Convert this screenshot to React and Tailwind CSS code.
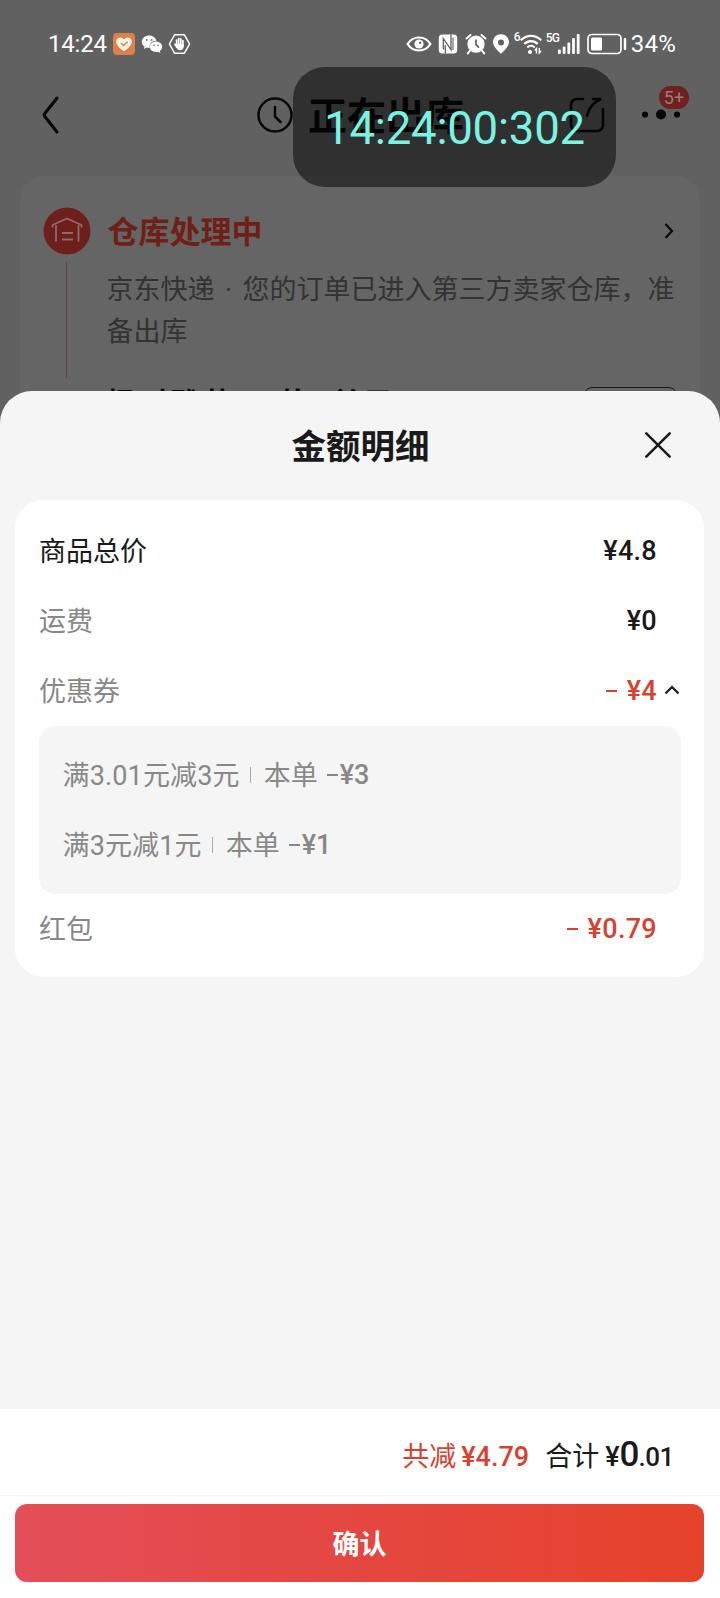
import React from "react";

const coupons = [
  { rule: "满3.01元减3元", amount: "¥3" },
  { rule: "满3元减1元", amount: "¥1" },
];

const StatusBar = () => (
  <div className="h-[88px] pl-12 pr-11 flex items-center justify-between text-white">
    <div className="flex items-center">
      <span className="w-[65px] text-2xl leading-6 tracking-[-0.2px]">14:24</span>
      <svg width="22" height="22" viewBox="0 0 22 22">
        <rect width="22" height="22" rx="4" fill="#dd8049" />
        <path
          d="M11 18.2C6.500 15 3.200 12 3.200 8.400c0-2.300 1.700-4 3.900-4 1.600 0 3 .8 3.900 2.100.9-1.300 2.300-2.100 3.900-2.100 2.200 0 3.900 1.700 3.900 4 0 3.600-3.300 6.600-7.800 9.800z"
          fill="#fff4e8"
        />
        <path d="M8 10l2.600 2.500 4-3.800" fill="none" stroke="#dd8049" strokeWidth="1.500" />
      </svg>
      <svg className="ml-1.5" width="22" height="22" viewBox="0 0 22 22" fill="#fff">
        <path d="M8.200 2.500C4 2.500.8 5.200.8 8.700c0 2 1 3.700 2.700 4.900l-.7 2.300 2.700-1.300c1 .3 1.800.4 2.700.4h.5c-.9-4 2.300-7.300 6.700-7.200-.7-3-3.600-5.300-7.200-5.300z" />
        <path d="M15 8.600c-3.500 0-6.200 2.300-6.200 5.200S11.500 19 15 19c.8 0 1.500-.1 2.200-.3l2.200 1.200-.6-2c1.500-1 2.400-2.400 2.400-4.100 0-2.900-2.700-5.200-6.200-5.200z" />
        <g fill="#606060">
          <circle cx="5.700" cy="6.900" r=".9" />
          <circle cx="10.600" cy="6.900" r=".9" />
          <circle cx="13" cy="12.300" r=".8" />
          <circle cx="17.100" cy="12.300" r=".8" />
        </g>
      </svg>
      <svg className="ml-[5px]" width="23" height="22" viewBox="0 0 23 22">
        <path
          d="M6.600 1.800h9.800L21.600 11l-5.200 9.200H6.600L1.400 11z"
          fill="none"
          stroke="#fff"
          strokeWidth="1.500"
          strokeLinejoin="round"
        />
        <g stroke="#fff" strokeWidth="1.700" strokeLinecap="round" fill="none">
          <path d="M8.600 7v6M10.700 5.600V12M12.800 5.800V12M14.900 7.500V13M6.900 11.300l2 3" />
        </g>
        <path d="M7.900 11h7.800v2.500c0 2.400-1.400 3.800-3.400 3.800-1.700 0-2.900-.8-3.600-2.300z" fill="#fff" />
      </svg>
    </div>

    <div className="flex items-center">
      <svg width="26" height="18" viewBox="0 0 26 18">
        <path
          d="M1.600 9C4.200 4.800 8.200 2.500 13 2.500S21.800 4.800 24.400 9c-2.600 4.200-6.600 6.500-11.400 6.500S4.200 13.200 1.600 9z"
          fill="none"
          stroke="#fff"
          strokeWidth="2.200"
        />
        <circle cx="13" cy="9" r="4.600" fill="#fff" />
        <circle cx="14.200" cy="7.700" r="1.200" fill="#606060" />
      </svg>
      <svg className="ml-[6px]" width="20" height="20" viewBox="0 0 20 20">
        <rect x=".8" y=".5" width="18.400" height="19" rx="3.500" fill="#fff" />
        <path
          d="M5.300 15.500V4.500L13 15.700V.5M7.300 19.500V11"
          fill="none"
          stroke="#606060"
          strokeWidth="1.300"
        />
        <path d="M15 3.500v12.500" stroke="#606060" strokeWidth="1.100" />
      </svg>
      <svg className="ml-[7px]" width="22" height="22" viewBox="0 0 22 22">
        <circle cx="11" cy="11.200" r="8.600" fill="#fff" />
        <path
          d="M1.500 5.500l4-3.600M20.500 5.500l-4-3.600M4.800 17.800l-2 2.600M17.200 17.800l2 2.600"
          stroke="#fff"
          strokeWidth="2"
          strokeLinecap="round"
        />
        <path d="M11 6.500v5.200l3 3" fill="none" stroke="#606060" strokeWidth="1.700" />
      </svg>
      <svg className="ml-[5px]" width="18" height="20" viewBox="0 0 18 20">
        <path
          d="M9 .2C4.500.2 1 3.500 1 8c0 3.800 3.600 7.800 8 11.800 4.400-4 8-8 8-11.800C17 3.500 13.500.2 9 .2zm0 5.300a3 3 0 110 6 3 3 0 010-6z"
          fill="#fff"
          fillRule="evenodd"
        />
      </svg>
      <span className="ml-[4px] w-[6px] self-start text-xs leading-[11px] font-medium">6</span>
      <svg width="22" height="21" viewBox="0 0 22 21" fill="none" stroke="#fff" strokeWidth="2.200">
        <path d="M.8 6.200C6.600.3 15.400.3 21.200 6.200M4.300 10c3.800-3.900 9.600-3.900 13.400 0M7.300 13.500c2.200-2.200 5.200-2.200 7.400 0" />
        <circle cx="10" cy="18" r="2" fill="#fff" stroke="none" />
        <path d="M16.500 19.500v-5l-1.800 2M19.300 14v5l1.800-2" strokeWidth="1.400" />
      </svg>
      <span className="ml-[4px] w-[13px] self-start text-xs leading-[11px] font-medium tracking-[-1px] mt-px">5G</span>
      <svg className="-ml-px" width="22" height="20" viewBox="0 0 22 20" fill="#fff">
        <rect x="0" y="15.500" width="2.800" height="4.500" rx="1" />
        <rect x="4.700" y="12.500" width="2.800" height="7.500" rx="1" />
        <rect x="9.400" y="8.500" width="2.800" height="11.500" rx="1" />
        <rect x="14.100" y="4" width="2.800" height="16" rx="1" />
        <rect x="18.800" y="0" width="2.800" height="20" rx="1" />
      </svg>
      <svg className="ml-[7px]" width="40" height="22" viewBox="0 0 40 22">
        <rect x="1" y="1.500" width="33" height="19" rx="4" fill="none" stroke="#fff" strokeWidth="1.700" />
        <rect x="4" y="4.500" width="11" height="13" rx="1.500" fill="#fff" />
        <rect x="36.800" y="5" width="2.400" height="12" rx="1" fill="#fff" />
      </svg>
      <span className="ml-[4px] text-2xl leading-6 tracking-[0.2px]">34%</span>
    </div>
  </div>
);

const Header = () => (
  <div className="h-[54px] pl-[41px] pr-[39px] flex items-center">
    <svg width="20" height="40" viewBox="0 0 20 40">
      <path
        d="M16 3L3.600 18.700a2 2 0 000 2.500L16 37"
        fill="none"
        stroke="#080808"
        strokeWidth="3"
        strokeLinecap="round"
      />
    </svg>
    <svg className="ml-[196px]" width="36" height="36" viewBox="0 0 36 36">
      <g fill="none" stroke="#080808" strokeWidth="2.500" strokeLinecap="round">
        <circle cx="18" cy="18" r="16.500" />
        <path d="M18 10v9.500l5.500 5.500" />
      </g>
    </svg>
    <h1 className="ml-[15px] pt-[3px] text-[39px] leading-[54px] font-bold text-[#080808]">正在出库</h1>
    <svg className="ml-[105px]" width="36" height="36" viewBox="0 0 36 36">
      <g fill="none" stroke="#080808" strokeWidth="2.600" strokeLinecap="round">
        <path d="M14 2H8a6 6 0 00-6 6v20a6 6 0 006 6h20a6 6 0 006-6V12" />
        <path d="M24 2h8c-7 3-12 8-14 17" />
      </g>
    </svg>
    <div className="relative ml-auto">
      <svg width="40" height="12" viewBox="0 0 40 12" fill="#080808">
        <circle cx="4" cy="5.500" r="3.100" />
        <circle cx="20" cy="5.500" r="5" />
        <circle cx="36" cy="5.500" r="3.100" />
      </svg>
      <span className="absolute left-[18px] -top-[23px] w-[30px] h-[23px] rounded-full bg-[#6e211d] text-[#a07a78] text-lg leading-[23px] text-center">
        5+
      </span>
    </div>
  </div>
);

const OrderCard = () => (
  <div className="mx-5 mt-[34px] h-[300px] rounded-[24px] bg-[#656565] flex">
    <div className="ml-[22.5px] mt-[31px] flex flex-col items-center">
      <svg width="48" height="48" viewBox="0 0 48 48">
        <circle cx="24" cy="24" r="23.500" fill="#6f1f1b" />
        <g fill="none" stroke="#8e6a68" strokeWidth="1.800">
          <path d="M9.500 20.500v-2.500L24 11.500l14.500 6.500v2.500M13 18v16.500M35.500 18v16.500M19 26h11M19 32.500h11" />
        </g>
      </svg>
      <div className="mt-[7px] w-px h-[116px] bg-[#5c4040]" />
    </div>
    <div className="ml-4 mt-8 w-[572px]">
      <div className="flex items-center justify-between h-[48px]">
        <h2 className="pt-px pl-px text-[31px] leading-[48px] font-bold text-[#701f17]">仓库处理中</h2>
        <svg className="mr-1 -mt-0.5" width="12" height="18" viewBox="0 0 12 18">
          <path d="M2.500 2l6.500 7-6.500 7" fill="none" stroke="#080808" strokeWidth="2.200" />
        </svg>
      </div>
      <p className="mt-[13px] text-[27px] leading-[42px] whitespace-nowrap text-[#333]">
        京东快递<span className="inline-block w-7 text-center">·</span>您的订单已进入第三方卖家仓库，准
        <br />
        备出库
      </p>
      <div className="mt-[30px] flex items-start justify-between">
        <span className="text-[30px] leading-[42px] font-bold tracking-[1.800px] text-[#080808] whitespace-pre">杨时雅苑   2栋1单元</span>
        <span className="mt-[4px] mr-0.5 w-[93px] h-10 rounded-lg border-[1.5px] border-[#1a1a1a]" />
      </div>
    </div>
  </div>
);

const AmountRow = ({ label, value, labelClass = "text-[#888]", discount, expanded }) => (
  <div className="h-[70px] px-6 flex items-center text-[27px] leading-[70px]">
    <span className={`pt-0.5 ${labelClass}`}>{label}</span>
    <span
      className={`ml-auto font-medium tracking-[0.3px] ${
        discount ? "text-[#d9402f]" : "text-[#1a1a1a]"
      }`}
    >
      {discount && (
        <span className="relative -top-0.5 inline-block mr-2.5 w-[11px] h-0.5 align-middle bg-[#d9402f]" />
      )}
      {value}
    </span>
    <span className="w-[23px] flex justify-end">
      {expanded && (
        <svg className="-mt-0.5" width="16" height="10" viewBox="0 0 16 10">
          <path d="M1.500 8.500L8 2l6.500 6.500" fill="none" stroke="#1a1a1a" strokeWidth="2.200" />
        </svg>
      )}
    </span>
  </div>
);

const AmountSheet = () => (
  <div className="absolute inset-x-0 bottom-0 top-[391px] rounded-t-[32px] bg-[#f5f5f5] flex flex-col">
    <div className="relative h-[109px] flex justify-center">
      <h2 className="pl-px pt-0.5 text-[34.5px] leading-[109px] font-bold text-[#1a1a1a]">金额明细</h2>
      <button type="button" className="absolute right-12 top-10">
        <svg width="28" height="28" viewBox="0 0 28 28">
          <path
            d="M2.300 2.300l23.400 23.400M25.700 2.300L2.300 25.700"
            stroke="#1a1a1a"
            strokeWidth="2.500"
            strokeLinecap="round"
          />
        </svg>
      </button>
    </div>

    <div className="ml-[15px] mr-4 pt-4 pb-[13px] rounded-[28px] bg-white">
      <AmountRow label="商品总价" value="¥4.8" labelClass="text-[#1a1a1a]" />
      <AmountRow label="运费" value="¥0" />
      <AmountRow label="优惠券" value="¥4" discount expanded />
      <div className="ml-6 mr-[23px] py-3.5 pl-[23.5px] rounded-2xl bg-[#f5f5f5] text-[27px] leading-[70px] text-[#888]">
        {coupons.map((c) => (
          <div key={c.rule} className="h-[70px] flex items-center">
            <span className="pt-0.5 tracking-[0.15px]">{c.rule}</span>
            <span className="ml-2.5 mr-[13px] w-px h-4 bg-[#aaa]" />
            <span className="pt-0.5">本单</span>
            <span className="ml-[9px] mr-0.5 w-[11px] h-0.5 bg-[#888]" />
            <span className="font-medium">{c.amount}</span>
          </div>
        ))}
      </div>
      <AmountRow label="红包" value="¥0.79" discount />
    </div>

    {/* Totals and confirm button */}
    <div className="mt-auto bg-white">
      <div className="h-[87px] pr-[46px] flex items-baseline justify-end text-[27px] leading-[91px] border-b border-[#f5f5f5]">
        <span className="text-[#d9402f]">共减</span>
        <span className="ml-[5px] font-medium text-[#d9402f]">¥4.79</span>
        <span className="ml-4 text-[#1a1a1a]">合计</span>
        <span className="ml-1.5 font-medium text-[#1a1a1a]">
          ¥<span className="text-[35px] tracking-[-1px]">0</span>
          <span className="text-[26px] tracking-[-0.4px]">.01</span>
        </span>
      </div>
      <div className="pt-2 pl-[15px] pr-4 pb-4">
        <button
          type="button"
          className="w-full h-[78px] pt-0.5 rounded-xl bg-linear-to-r from-[#e34e58] via-[#e54740] to-[#e6422b] text-[27px] leading-[78px] font-bold text-white"
        >
          确认
        </button>
      </div>
    </div>
  </div>
);

const App = () => {
  return (
    <div className="relative w-[720px] h-[1598px] overflow-hidden bg-[#616161] font-[Roboto,'Noto_Sans_CJK_SC',sans-serif]">
      <StatusBar />
      <Header />
      <OrderCard />
      <AmountSheet />

      {/* Floating clock */}
      <div className="absolute left-[293px] top-[67px] w-[323px] h-[120px] rounded-[32px] bg-black/50 text-center text-[45.5px] leading-[123px] tracking-[-0.2px] text-[#79f3e2]">
        14:24:00:302
      </div>
    </div>
  );
};

export default App;
